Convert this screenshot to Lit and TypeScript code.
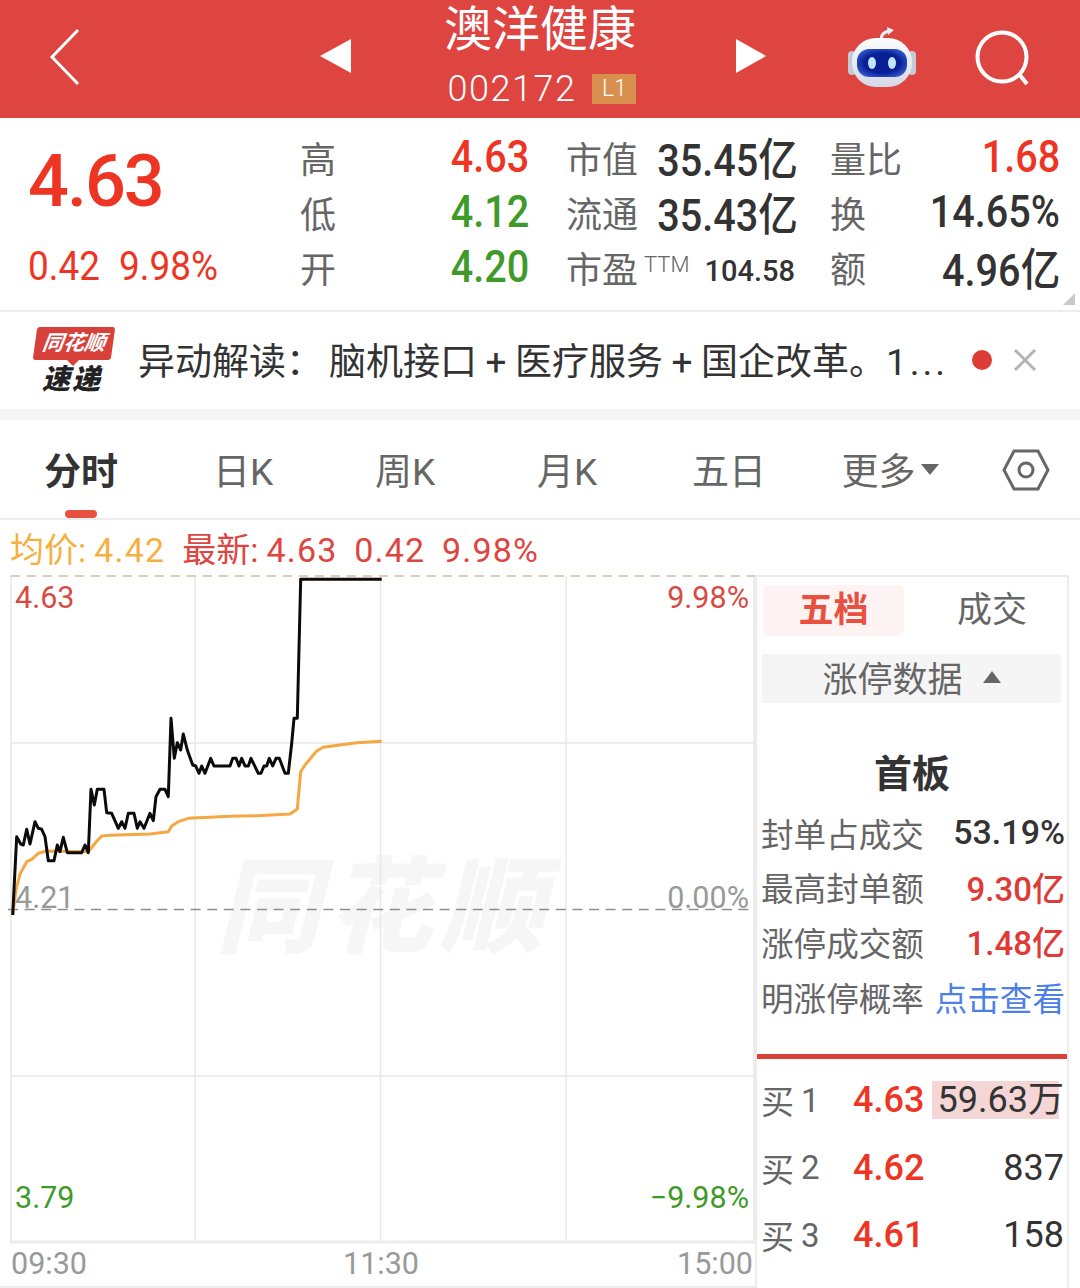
import { LitElement, html, css, svg } from 'lit';
import { customElement } from 'lit/decorators.js';

const BLACK: number[][] = [
  [38,1035],[50,800],[62,822],[70,825],[80,778],[90,822],[105,755],[115,775],[125,778],[135,800],[145,872],[162,872],[172,825],[180,845],[190,802],[202,848],[245,848],[255,825],[265,848],[273,658],[283,705],[292,658],[312,658],[320,728],[335,730],[355,775],[365,755],[375,775],[385,730],[402,730],[412,775],[420,755],[432,775],[450,730],[460,752],[468,680],[480,658],[495,658],[505,680],[513,445],[523,565],[532,518],[542,540],[550,492],[562,540],[578,585],[587,588],[597,610],[605,588],[615,610],[632,565],[642,588],[690,588],[698,565],[708,565],[717,588],[725,565],[735,588],[745,588],[753,565],[775,610],[783,610],[792,588],[800,588],[808,565],[818,588],[828,565],[838,565],[855,610],[865,610],[875,520],[882,445],[892,445],[902,28],[1145,28],
];
const ORANGE: number[][] = [
  [38,1035],[48,960],[60,912],[80,875],[95,868],[115,850],[140,843],[265,845],[285,820],[305,798],[330,796],[450,792],[505,785],[515,768],[535,755],[565,745],[690,739],[770,737],[870,732],[892,717],[902,605],[915,585],[950,543],[970,532],[1070,518],[1145,514],
];

// traced at 3x from y=570, chart svg starts at y=575
const toPoints = (pts: number[][]) =>
  pts.map(([x, y]) => `${(x / 3).toFixed(1)},${(y / 3 - 5).toFixed(1)}`).join(' ');

const TABS = ['分时', '日K', '周K', '月K', '五日'];

const STATS = [
  { k: '高', v: '4.63', c: 'red', k2: '市值', v2: '35.45亿', k3: '量比', v3: '1.68', c3: 'red' },
  { k: '低', v: '4.12', c: 'green', k2: '流通', v2: '35.43亿', k3: '换', v3: '14.65%', c3: '' },
  { k: '开', v: '4.20', c: 'green', k2: '市盈', v2: '104.58', k3: '额', v3: '4.96亿', c3: '' },
];

const LIMIT_ROWS = [
  { k: '封单占成交', v: '53.19%', c: 'dark' },
  { k: '最高封单额', v: '9.30亿', c: 'red' },
  { k: '涨停成交额', v: '1.48亿', c: 'red' },
  { k: '明涨停概率', v: '点击查看', c: 'blue' },
];

const BIDS = [
  { k: '买', n: 1, p: '4.63', q: '59.63万', hi: true },
  { k: '买', n: 2, p: '4.62', q: '837', hi: false },
  { k: '买', n: 3, p: '4.61', q: '158', hi: false },
];

@customElement('app-root')
export class AppRoot extends LitElement {
  static styles = css`
    :host {
      display: block;
      width: 1080px;
      height: 1288px;
      overflow: hidden;
      background: #fff;
      font-family: Roboto, 'Noto Sans CJK SC', sans-serif;
      color: #333;
    }
    svg {
      display: block;
    }
    .header {
      height: 118px;
      background: #de4440;
      display: flex;
      align-items: center;
      color: #fff;
    }
    .back {
      margin-left: 49px;
      margin-top: -4px;
      width: 271px;
    }
    .tri {
      margin-top: -6px;
    }
    .title {
      width: 385px;
      padding-right: 7px;
      box-sizing: border-box;
      display: flex;
      flex-direction: column;
      align-items: center;
      align-self: flex-start;
    }
    .name {
      font-size: 48px;
      line-height: 56px;
      margin-top: 2px;
    }
    .code {
      display: flex;
      align-items: center;
      gap: 16px;
      font-size: 36px;
      font-weight: 300;
      line-height: 42px;
      letter-spacing: 1.5px;
      padding-left: 4px;
      margin-top: 10px;
    }
    .badge {
      width: 44px;
      height: 30px;
      background: #d98f4e;
      font-size: 23px;
      line-height: 30px;
      text-align: center;
      letter-spacing: 0;
    }
    .robot {
      margin-left: 82px;
      margin-top: -3px;
    }
    .search {
      margin-left: 59px;
      margin-top: -2px;
    }
    .stats {
      height: 194px;
      display: flex;
      box-sizing: border-box;
      border-bottom: 2px solid #ececec;
      position: relative;
    }
    .now {
      width: 300px;
      padding-left: 28px;
      box-sizing: border-box;
      color: #ee3524;
    }
    .now .big {
      font-size: 72px;
      font-weight: 500;
      line-height: 72px;
      margin-top: 28px;
      letter-spacing: -2px;
    }
    .now .sub {
      display: flex;
      gap: 18px;
      font-size: 41px;
      line-height: 44px;
      margin-top: 26px;
    }
    .now .sub span {
      display: block;
      transform: scaleX(0.9);
      transform-origin: left center;
      margin-right: -7px;
    }
    .grid {
      display: grid;
      grid-template-columns: 266px 264px 230px;
      grid-auto-rows: 55px;
      margin-top: 14px;
    }
    .cell {
      display: flex;
      align-items: center;
      justify-content: space-between;
      white-space: nowrap;
    }
    .key {
      font-size: 36px;
      color: #666;
      margin-top: -6px;
    }
    .val {
      font-size: 45px;
      font-weight: 500;
      color: #333;
      margin-top: -6px;
      transform: scaleX(0.88);
      transform-origin: right center;
    }
    .val.sm {
      font-size: 29px;
      margin-top: 2px;
      transform: none;
    }
    .ttm {
      font-size: 22px;
      font-weight: 300;
      color: #666;
      margin: -10px auto 0 6px;
    }
    .red {
      color: #ee3524;
    }
    .green {
      color: #3f9a2a;
    }
    .corner {
      position: absolute;
      right: 5px;
      bottom: 5px;
      width: 0;
      height: 0;
      border-left: 12px solid transparent;
      border-bottom: 12px solid #c9c9c9;
    }
    .banner {
      height: 97px;
      display: flex;
      align-items: center;
      position: relative;
    }
    .logo {
      width: 138px;
      flex: none;
      position: relative;
      height: 97px;
    }
    .logo-top {
      position: absolute;
      left: 35px;
      top: 15px;
      width: 78px;
      height: 33px;
      background: #d8403a;
      border-radius: 3px;
      transform: skewX(-8deg);
      color: #fff;
      font-size: 21px;
      font-weight: 700;
      font-style: italic;
      line-height: 33px;
      text-align: center;
      white-space: nowrap;
    }
    .logo-tip {
      position: absolute;
      left: 66px;
      top: 47px;
      width: 0;
      height: 0;
      border-left: 7px solid transparent;
      border-right: 7px solid transparent;
      border-top: 7px solid #d8403a;
    }
    .logo-sub {
      position: absolute;
      left: 42px;
      top: 50px;
      color: #222;
      font-size: 28px;
      line-height: 36px;
      font-weight: 900;
      font-style: italic;
      letter-spacing: 2px;
      white-space: nowrap;
    }
    .news {
      font-size: 37px;
      color: #333;
      white-space: nowrap;
      width: 812px;
      margin-top: -3px;
    }
    .news .colon {
      margin-right: 6px;
    }
    .news .plus {
      padding: 0 8.5px;
    }
    .news .more-dots {
      letter-spacing: 3px;
      margin-left: 3px;
    }
    .dot {
      width: 20px;
      height: 20px;
      border-radius: 50%;
      background: #de3c36;
      position: absolute;
      left: 972px;
      top: 38px;
    }
    .close {
      position: absolute;
      left: 1013px;
      top: 36px;
    }
    .gap {
      height: 11px;
      background: #f5f5f5;
    }
    .tabs {
      height: 100px;
      display: flex;
      box-sizing: border-box;
      border-bottom: 2px solid #ececec;
      align-items: center;
    }
    .tab {
      width: 162px;
      text-align: center;
      font-size: 37px;
      color: #666;
      position: relative;
      height: 98px;
      line-height: 105px;
    }
    .tab.on {
      color: #333;
      font-weight: 700;
    }
    .tab.on::after {
      content: '';
      position: absolute;
      left: 65px;
      bottom: 0;
      width: 32px;
      height: 8px;
      border-radius: 4px;
      background: #e8503f;
    }
    .more {
      display: flex;
      align-items: center;
      justify-content: center;
      gap: 5px;
      padding: 0 2px 0 0;
      box-sizing: border-box;
    }
    .more-label {
      margin-top: 6px;
    }
    .caret {
      width: 0;
      height: 0;
      border-left: 9px solid transparent;
      border-right: 9px solid transparent;
      border-top: 11px solid #666;
    }
    .hex {
      margin-left: 29px;
      margin-top: 2px;
    }
    .legend {
      height: 55px;
      display: flex;
      align-items: center;
      padding-left: 10px;
      gap: 17px;
      font-size: 34px;
      white-space: nowrap;
    }
    .legend .avg,
    .legend .last {
      display: flex;
      align-items: baseline;
      gap: 8px;
    }
    .legend .avg {
      color: #f5b042;
    }
    .legend .last {
      color: #de4440;
    }
    .legend .num {
      letter-spacing: 1.2px;
      word-spacing: 7px;
    }
    .main {
      display: flex;
      height: 713px;
    }
    .chart {
      width: 755px;
      flex: none;
    }
    .side {
      width: 314px;
      box-sizing: border-box;
      border-left: 2px solid #ececec;
      border-right: 2px solid #ececec;
      border-top: 2px solid #ececec;
      height: 713px;
      display: flex;
      flex-direction: column;
    }
    .side-tabs {
      display: flex;
      margin: 8px 0 0 6px;
      height: 51px;
    }
    .side-tab {
      flex: none;
      width: 141px;
      height: 51px;
      line-height: 51px;
      text-align: center;
      font-size: 35px;
      color: #666;
    }
    .side-tab.on {
      background: #fdf3f3;
      border-radius: 6px;
      color: #e8503f;
      font-weight: 700;
    }
    .side-tab.off {
      width: 176px;
    }
    .limit-bar {
      margin: 18px 6px 0 5px;
      height: 49px;
      box-sizing: border-box;
      padding-bottom: 4px;
      background: #f5f5f5;
      display: flex;
      align-items: center;
      justify-content: center;
      gap: 20px;
      font-size: 35px;
      color: #666;
    }
    .up {
      width: 0;
      height: 0;
      border-left: 9px solid transparent;
      border-right: 9px solid transparent;
      border-bottom: 12px solid #666;
    }
    .board {
      text-align: center;
      font-size: 38px;
      font-weight: 700;
      color: #333;
      margin-top: 41px;
      line-height: 60px;
    }
    .limit {
      margin-top: 1px;
      padding-left: 4px;
      display: flex;
      flex-direction: column;
    }
    .limit-row {
      display: flex;
      justify-content: space-between;
      align-items: center;
      height: 54.6px;
      width: 304px;
      white-space: nowrap;
      font-size: 32.6px;
      color: #666;
    }
    .limit-row .dark {
      color: #333;
      font-weight: 500;
      font-size: 34px;
    }
    .limit-row .red {
      color: #de3a36;
      font-weight: 500;
      font-size: 33px;
    }
    .limit-row .blue {
      color: #4d7fe8;
      font-size: 32.6px;
    }
    .rule {
      height: 5px;
      background: #d8403a;
      margin-top: 31px;
    }
    .bids {
      margin-top: 7px;
      padding-left: 4px;
    }
    .bid {
      display: flex;
      align-items: center;
      height: 67.5px;
      white-space: nowrap;
    }
    .bid .lab {
      width: 92px;
      font-size: 33px;
      color: #666;
      display: flex;
      align-items: center;
      gap: 7px;
    }
    .bid .price {
      width: 76px;
      font-size: 36px;
      font-weight: 500;
      color: #ee3524;
    }
    .bid .qty {
      width: 135px;
      font-size: 36px;
      line-height: 38px;
      color: #333;
      text-align: right;
      position: relative;
      z-index: 0;
    }
    .bid .hi::before {
      content: '';
      position: absolute;
      z-index: -1;
      left: 3px;
      right: 5px;
      top: 0;
      height: 38px;
      background: #f4d6d6;
    }
  `;

  renderChart() {
    return html`<svg class="chart" width="755" height="713" viewBox="0 0 755 713">
      <text x="380" y="369" text-anchor="middle" font-size="104" font-weight="900" font-style="italic"
        font-family="'Noto Sans CJK SC', sans-serif" fill="#f6f6f6" textLength="328">同花顺</text>
      ${svg`
        <g stroke="#ececec" stroke-width="2" fill="none">
          <path d="M11 1V667" />
          <path d="M754 1V667" />
          <path d="M11 168H754" />
          <path d="M11 501H754" />
          <path d="M10 667H755" stroke-width="3" />
          <path d="M0 712H755" />
        </g>
        <g stroke="#e8e8e8" stroke-width="1.5" fill="none">
          <path d="M195 1V667" />
          <path d="M380.5 1V667" />
          <path d="M566 1V667" />
        </g>
        <path d="M11 1H755" stroke="#dccdb4" stroke-width="2" stroke-dasharray="9 7" fill="none" />
        <path d="M8 334.5H755" stroke="#8e8e8e" stroke-width="1.5" stroke-dasharray="10 6.6" fill="none" />
        <polyline points=${toPoints(ORANGE)} fill="none" stroke="#f4a742" stroke-width="3" stroke-linejoin="round" />
        <polyline points=${toPoints(BLACK)} fill="none" stroke="#0b0b0b" stroke-width="3" stroke-linejoin="round" />
      `}
      <g font-family="Roboto, sans-serif" font-size="30.5">
        <text x="15" y="33" fill="#d84a44">4.63</text>
        <text x="15" y="333" fill="#999">4.21</text>
        <text x="15" y="633" fill="#3f9a2a">3.79</text>
        <text x="749" y="33" text-anchor="end" fill="#d84a44">9.98%</text>
        <text x="749" y="333" text-anchor="end" fill="#999">0.00%</text>
        <text x="749" y="633" text-anchor="end" fill="#3f9a2a">−9.98%</text>
        <text x="11" y="699" fill="#999">09:30</text>
        <text x="381" y="699" text-anchor="middle" fill="#999">11:30</text>
        <text x="753" y="699" text-anchor="end" fill="#999">15:00</text>
      </g>
    </svg>`;
  }

  renderRobot() {
    return html`<svg class="robot" width="68" height="62" viewBox="0 0 68 62">
      <defs>
        <linearGradient id="shell" x1="0" y1="0" x2="0" y2="1">
          <stop offset="0" stop-color="#fdfdff" />
          <stop offset="1" stop-color="#d5d9e6" />
        </linearGradient>
        <radialGradient id="visor" cx="0.5" cy="0.5" r="0.65">
          <stop offset="0.55" stop-color="#0a1f96" />
          <stop offset="1" stop-color="#3f6fe0" />
        </radialGradient>
      </defs>
      <path d="M33 13C33 8 35 5 41 4" fill="none" stroke="#eef0f6" stroke-width="3" />
      <path d="M39 0L46 3L40 8Z" fill="#eef0f6" />
      <rect x="0" y="24" width="8" height="24" rx="4" fill="#c4c9d8" />
      <rect x="60" y="24" width="8" height="24" rx="4" fill="#c4c9d8" />
      <rect x="4" y="11" width="60" height="49" rx="24" fill="url(#shell)" />
      <rect x="9" y="22" width="50" height="28" rx="12" fill="url(#visor)" />
      <ellipse cx="24" cy="36" rx="4" ry="6" fill="#bfe6ff" />
      <ellipse cx="44" cy="36" rx="4" ry="6" fill="#bfe6ff" />
    </svg>`;
  }

  render() {
    return html`
      <div class="header">
        <svg class="back" width="271" height="60" viewBox="0 0 271 60">
          <path d="M29 3L3 30L29 57" fill="none" stroke="#fff" stroke-width="3" />
        </svg>
        <svg class="tri" width="31" height="34" viewBox="0 0 31 34"><path d="M31 0V34L0 17Z" fill="#fff" /></svg>
        <div class="title">
          <div class="name">澳洋健康</div>
          <div class="code">002172<span class="badge">L1</span></div>
        </div>
        <svg class="tri" width="30" height="34" viewBox="0 0 30 34"><path d="M0 0V34L30 17Z" fill="#fff" /></svg>
        ${this.renderRobot()}
        <svg class="search" width="56" height="56" viewBox="0 0 56 56">
          <circle cx="27" cy="27" r="24.5" fill="none" stroke="#fff" stroke-width="4" />
          <path d="M44 44L52 54" fill="none" stroke="#fff" stroke-width="4" />
        </svg>
      </div>

      <div class="stats">
        <div class="now">
          <div class="big">4.63</div>
          <div class="sub"><span>0.42</span><span>9.98%</span></div>
        </div>
        <div class="grid">
          ${STATS.map(
            (row) => html`
              <div class="cell" style="padding-right:37px">
                <span class="key">${row.k}</span>
                <span class="val ${row.c}">${row.v}</span>
              </div>
              <div class="cell" style="padding-right:35px">
                <span class="key">${row.k2}</span>
                ${row.k2 === '市盈' ? html`<span class="ttm">TTM</span>` : ''}
                <span class="val ${row.k2 === '市盈' ? 'sm' : ''}">${row.v2}</span>
              </div>
              <div class="cell">
                <span class="key">${row.k3}</span>
                <span class="val ${row.c3}">${row.v3}</span>
              </div>
            `,
          )}
        </div>
        <div class="corner"></div>
      </div>

      <div class="banner">
        <div class="logo">
          <div class="logo-top">同花顺</div>
          <div class="logo-tip"></div>
          <div class="logo-sub">速递</div>
        </div>
        <div class="news">异动解读<span class="colon">：</span>脑机接口<span class="plus">+</span>医疗服务<span class="plus">+</span>国企改革。1<span class="more-dots">...</span></div>
        <div class="dot"></div>
        <svg class="close" width="24" height="24" viewBox="0 0 24 24">
          <path d="M2 2L22 22M22 2L2 22" stroke="#b3b3b3" stroke-width="3" fill="none" />
        </svg>
      </div>
      <div class="gap"></div>

      <div class="tabs">
        ${TABS.map((t, i) => html`<div class="tab ${i === 0 ? 'on' : ''}">${t}</div>`)}
        <div class="tab more"><span class="more-label">更多</span><span class="caret"></span></div>
        <svg class="hex" width="50" height="42" viewBox="0 0 50 42">
          <path d="M13 2H37L47 21L37 40H13L3 21Z" fill="none" stroke="#666" stroke-width="3" />
          <circle cx="25" cy="21" r="7" fill="none" stroke="#666" stroke-width="3" />
        </svg>
      </div>

      <div class="legend">
        <span class="avg"><span>均价:</span><span class="num">4.42</span></span>
        <span class="last"><span>最新:</span><span class="num">4.63 0.42 9.98%</span></span>
      </div>

      <div class="main">
        ${this.renderChart()}
        <div class="side">
          <div class="side-tabs">
            <div class="side-tab on">五档</div>
            <div class="side-tab off">成交</div>
          </div>
          <div class="limit-bar">涨停数据<span class="up"></span></div>
          <div class="board">首板</div>
          <div class="limit">
            ${LIMIT_ROWS.map(
              (r) => html`<div class="limit-row"><span>${r.k}</span><span class=${r.c}>${r.v}</span></div>`,
            )}
          </div>
          <div class="rule"></div>
          <div class="bids">
            ${BIDS.map(
              (b) => html`<div class="bid">
                <span class="lab"><span>${b.k}</span><span>${b.n}</span></span>
                <span class="price">${b.p}</span>
                <span class="qty ${b.hi ? 'hi' : ''}">${b.q}</span>
              </div>`,
            )}
          </div>
        </div>
      </div>
    `;
  }
}
